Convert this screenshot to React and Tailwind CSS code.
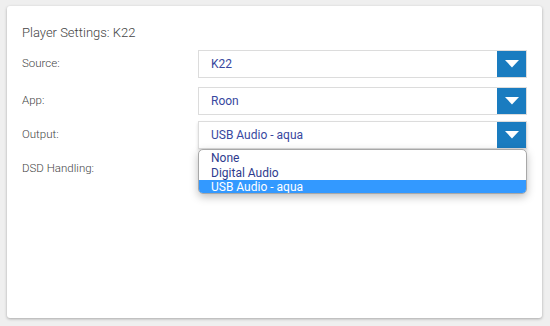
export default function App() {
  const Arrow = () => (
    <div className="w-[29px] h-full bg-[#1a7cc0] flex items-center justify-center shrink-0">
      <svg width="14" height="8" viewBox="0 0 14 8"><path d="M0 0 L14 0 L7 7.5 Z" fill="#fff" /></svg>
    </div>
  );
  const Select = ({ value, cls = "" }) => (
    <div className={"w-[329px] h-[28px] bg-white border border-[#dcdcdc] flex items-stretch " + cls}>
      <div className="flex-1 flex items-center pl-[12px] text-[12px] text-[#3848a0]">{value}</div>
      <Arrow />
    </div>
  );
  const lbl = "w-[176px] text-[11.5px] font-light text-[#444]";
  return (
    <div className="w-[550px] h-[326px] bg-[#efefef] pt-[6px] pl-[7px] pr-[8px] pb-[8px]" style={{ fontFamily: "Roboto, 'Liberation Sans', sans-serif" }}>
      <div className="relative w-full h-full bg-white rounded-[3px] shadow-[0_1px_3px_rgba(0,0,0,0.3)] px-[15px] pt-[19px]">
        <div className="text-[13px] font-light text-[#444] leading-[15px]">Player Settings: K22</div>
        <div className="flex items-center mt-[10px]">
          <div className={lbl}>Source:</div>
          <Select value="K22" />
        </div>
        <div className="flex items-center mt-[9px]">
          <div className={lbl}>App:</div>
          <Select value="Roon" />
        </div>
        <div className="flex items-center mt-[6px]">
          <div className={lbl}>Output:</div>
          <Select value="USB Audio - aqua" cls="shadow-[0_2px_3px_rgba(0,0,0,0.15)]" />
        </div>
        <div className="flex items-center mt-[6px] h-[28px]">
          <div className={lbl}>DSD Handling:</div>
        </div>
        <div className="absolute left-[191px] top-[143px] w-[329px] h-[45px] bg-white border border-[#a8a8a8] rounded-[5px] shadow-[0_3px_8px_rgba(0,0,0,0.25)] overflow-hidden pt-[1px] text-[12px] leading-[14.5px]">
          <div className="pl-[12px] text-[#2e3b8e]">None</div>
          <div className="pl-[12px] text-[#2e3b8e]">Digital Audio</div>
          <div className="pl-[12px] bg-[#3399ff] text-white">USB Audio - aqua</div>
        </div>
      </div>
    </div>
  );
}
